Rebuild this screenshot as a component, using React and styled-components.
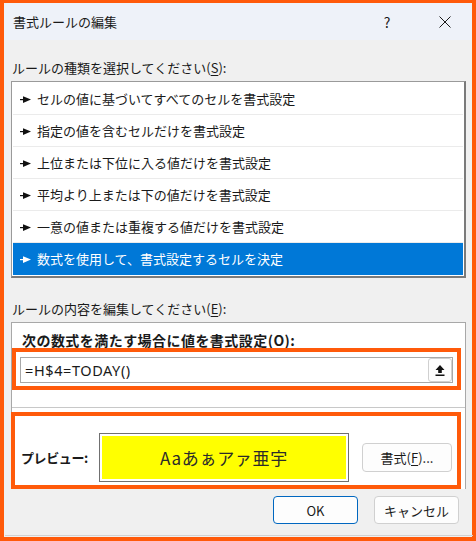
import React from 'react';
import styled, { createGlobalStyle } from 'styled-components';

const GlobalStyle = createGlobalStyle`
  body {
    margin: 0;
    font-family: "Noto Sans CJK JP", "Noto Sans", sans-serif;
    color: #1a1a1a;
  }
`;

const rules = [
  'セルの値に基づいてすべてのセルを書式設定',
  '指定の値を含むセルだけを書式設定',
  '上位または下位に入る値だけを書式設定',
  '平均より上または下の値だけを書式設定',
  '一意の値または重複する値だけを書式設定',
  '数式を使用して、書式設定するセルを決定',
];

const Window = styled.div`
  width: 476px;
  height: 541px;
  box-sizing: border-box;
  border: 4px solid #ff5a0a;
  border-top-width: 3px;
  background: #f0f0f0;
  display: flex;
  flex-direction: column;
  font-size: 13px;
`;

const TitleBar = styled.div`
  height: 37px;
  flex-shrink: 0;
  background: #eef2f9;
  display: flex;
  align-items: center;
  padding-left: 9px;
`;

const Title = styled.div`
  flex: 1;
  font-size: 13px;
`;

const TitleButtons = styled.div`
  display: flex;
  gap: 12px;
  margin-right: 4px;
  height: 100%;
`;

const TitleButton = styled.div`
  width: 46px;
  display: flex;
  align-items: center;
  justify-content: center;
  font-size: 14px;
`;

const Body = styled.div`
  padding: 0 6px 0 7px;
  display: flex;
  flex-direction: column;
  flex: 1;
`;

const Label = styled.div`
  margin-top: ${p => p.$top}px;
  line-height: 20px;
  height: 20px;
  padding-left: 1px;
  u { text-underline-offset: 2px; }
`;

const List = styled.div`
  margin-top: 3px;
  background: #fff;
  border: 1px solid #9a9a9a;
  border-right: 2px solid #7a7a7a;
  border-bottom: 2px solid #7a7a7a;
  padding: 1px;
`;

const Item = styled.div`
  height: 32px;
  box-sizing: border-box;
  display: flex;
  align-items: center;
  gap: 6px;
  padding-left: 7px;
  padding-top: 1px;
  border-bottom: 1px solid ${p => (p.$last ? 'transparent' : '#ebebeb')};
  background: ${p => (p.$selected ? '#0078d7' : 'transparent')};
  color: ${p => (p.$selected ? '#fff' : '#1a1a1a')};
  line-height: 20px;
`;

const Panel = styled.div`
  margin-top: 3px;
  height: 167px;
  box-sizing: border-box;
  background: #fff;
  border: 1px solid #a8a8a8;
  border-bottom: none;
  display: flex;
  flex-direction: column;
`;

const BoldLabel = styled.div`
  padding: 9px 0 0 10px;
  height: 16px;
  line-height: 16px;
  font-size: 14px;
  font-weight: 700;
  letter-spacing: 0.45px;
`;

const FormulaFrame = styled.div`
  margin-right: 4px;
  border: 4px solid #ff5a0a;
  padding: 5px 4px 3px 4px;
`;

const FormulaInput = styled.div`
  height: 26px;
  box-sizing: border-box;
  border: 1px solid #a8a8a8;
  display: flex;
  align-items: center;
  padding-left: 4px;
  font-family: "Noto Sans", "Noto Sans CJK JP", sans-serif;
  font-size: 14.5px;
`;

const FormulaText = styled.span`
  flex: 1;
  letter-spacing: 0.6px;
`;

const CollapseButton = styled.div`
  width: 24px;
  height: 24px;
  box-sizing: border-box;
  border: 1px solid #d0d0d0;
  border-radius: 3px;
  background: #fdfdfd;
  display: flex;
  align-items: center;
  justify-content: center;
`;

const Divider = styled.div`
  margin-top: 17px;
  height: 1px;
  background: #c8c8c8;
`;

const PreviewFrame = styled.div`
  margin: 4px 4px 0 -1px;
  border: 4px solid #ff5a0a;
  padding: 17px 5px 3px 6px;
  display: flex;
  align-items: center;
`;

const PreviewLabel = styled.div`
  width: 78px;
  font-weight: 700;
  font-size: 13px;
  letter-spacing: -0.4px;
`;

const Swatch = styled.div`
  width: 250px;
  height: 49px;
  box-sizing: border-box;
  border: 1px solid #707070;
  padding: 2px;
  background: #ffff00;
  background-clip: content-box;
  display: flex;
  align-items: center;
  justify-content: center;
  font-size: 17px;
  color: #2b2b2b;
  letter-spacing: 0.7px;
`;

const Button = styled.div`
  width: ${p => p.$w}px;
  height: ${p => p.$h}px;
  box-sizing: border-box;
  border: 1px solid ${p => (p.$primary ? '#0067c0' : '#d0d0d0')};
  border-radius: 4px;
  background: #fdfdfd;
  display: flex;
  align-items: center;
  justify-content: center;
  margin-left: ${p => p.$ml || 0}px;
  font-size: 13px;
  u { text-underline-offset: 2px; }
`;

const Footer = styled.div`
  margin-top: 7px;
  display: flex;
  justify-content: flex-end;
  gap: 16px;
  padding-right: 7px;
`;

const BottomEdge = styled.div`
  margin: auto -7px 1px -6px;
  height: 1px;
  background: #d2d2d2;
`;

const Pointer = ({ color }) => (
  <svg width="11" height="7" viewBox="0 0 11 7">
    <rect x="0" y="3" width="4" height="1.2" fill={color} />
    <path d="M3 0.3 L11 3.6 L3 6.9 Z" fill={color} />
  </svg>
);

const UploadIcon = () => (
  <svg width="10" height="11" viewBox="0 0 10 11">
    <path d="M5 0 L9.5 5 L6.8 5 L6.8 8 L3.2 8 L3.2 5 L0.5 5 Z" fill="#111" />
    <rect x="0.5" y="9.5" width="9" height="1.5" fill="#111" />
  </svg>
);

const CloseIcon = () => (
  <svg width="12" height="12" viewBox="0 0 12 12">
    <path d="M0.5 0.5 L11.5 11.5 M11.5 0.5 L0.5 11.5" stroke="#1a1a1a" strokeWidth="1" />
  </svg>
);

export default function App() {
  return (
    <>
      <GlobalStyle />
      <Window>
        <TitleBar>
          <Title>書式ルールの編集</Title>
          <TitleButtons>
            <TitleButton>?</TitleButton>
            <TitleButton><CloseIcon /></TitleButton>
          </TitleButtons>
        </TitleBar>
        <Body>
          <Label $top={18}>ルールの種類を選択してください(<u>S</u>):</Label>
          <List>
            {rules.map((r, i) => {
              const sel = i === rules.length - 1;
              return (
                <Item key={r} $selected={sel} $last={sel}>
                  <Pointer color={sel ? '#fff' : '#111'} />
                  <span>{r}</span>
                </Item>
              );
            })}
          </List>
          <Label $top={21}>ルールの内容を編集してください(<u>E</u>):</Label>
          <Panel>
            <BoldLabel>次の数式を満たす場合に値を書式設定(O):</BoldLabel>
            <FormulaFrame>
              <FormulaInput>
                <FormulaText>=H$4=TODAY()</FormulaText>
                <CollapseButton><UploadIcon /></CollapseButton>
              </FormulaInput>
            </FormulaFrame>
            <Divider />
            <PreviewFrame>
              <PreviewLabel>プレビュー:</PreviewLabel>
              <Swatch>Aaあぁアァ亜宇</Swatch>
              <Button $w={90} $h={29} $ml={13}>書式(<u>F</u>)...</Button>
            </PreviewFrame>
          </Panel>
          <Footer>
            <Button $w={85} $h={28} $primary>OK</Button>
            <Button $w={85} $h={28}>キャンセル</Button>
          </Footer>
          <BottomEdge />
        </Body>
      </Window>
    </>
  );
}
